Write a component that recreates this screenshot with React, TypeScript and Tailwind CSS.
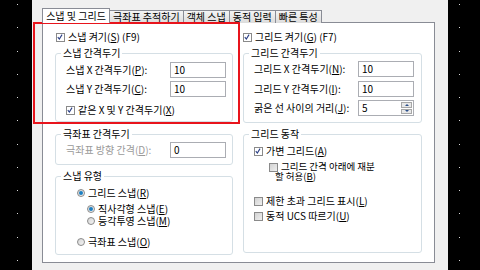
import type { ReactNode } from "react";

const dots = Array.from({ length: 12 }, (_, i) => i);

function DotStrip({ dotX }: { dotX: string }) {
  return (
    <div className={`w-[32px] h-full bg-black pt-[4px] pb-[9px] flex flex-col justify-between ${dotX}`}>
      {dots.map((d) => (
        <span key={d} className="block w-[1px] h-[1px] bg-[#d8d8d8]" />
      ))}
    </div>
  );
}

function Checkbox({ checked }: { checked?: boolean }) {
  return (
    <span
      className={`relative shrink-0 w-[9px] h-[9px] border border-[#8a8a8a] ${
        checked ? "bg-white" : "bg-gradient-to-br from-[#d2d2d2] to-[#efefef]"
      }`}
    >
      {checked && (
        <svg viewBox="0 0 9 9" className="absolute left-0 top-0 w-[7px] h-[7px]">
          <path d="M1 4 L3 6.5 L6.5 0.8" stroke="#2b3f86" strokeWidth="1.4" fill="none" />
        </svg>
      )}
    </span>
  );
}

function Radio({ checked }: { checked?: boolean }) {
  return (
    <span className="shrink-0 w-[8px] h-[8px] rounded-full border border-[#8a8a8a] bg-gradient-to-br from-[#d6d6d6] to-[#f4f4f4] flex items-center justify-center">
      {checked && <span className="w-[4px] h-[4px] rounded-full bg-[#1c7fc2]" />}
    </span>
  );
}

function Group({ title, className, children }: { title: string; className: string; children: ReactNode }) {
  return (
    <div className={`relative border border-[#d5dfe5] rounded-[3px] ${className}`}>
      <span className="absolute -top-[7px] left-[5px] bg-white px-[2px] leading-[12px]">{title}</span>
      {children}
    </div>
  );
}

function Field({ label, value, dim, spin }: { label: ReactNode; value: string; dim?: boolean; spin?: boolean }) {
  return (
    <div className="flex items-center h-[16px]">
      <span className={`w-[104px] ${dim ? "text-[#9a9a9a]" : ""}`}>{label}</span>
      <span className="relative w-[56px] h-[16px] border border-[#abadb3] bg-white pl-[3px] leading-[13px]">
        {value}
        {spin && (
          <span className="absolute right-[1px] top-[1px] w-[11px] h-[12px] flex flex-col gap-[1px]">
            <span className="flex-1 border border-[#a7a7a7] bg-[#e8e8e8] flex items-center justify-center">
              <span className="w-0 h-0 border-x-[2px] border-x-transparent border-b-[2px] border-b-[#2a4f8a]" />
            </span>
            <span className="flex-1 border border-[#a7a7a7] bg-[#e8e8e8] flex items-center justify-center">
              <span className="w-0 h-0 border-x-[2px] border-x-transparent border-t-[2px] border-t-[#2a4f8a]" />
            </span>
          </span>
        )}
      </span>
    </div>
  );
}

const tabs = ["극좌표 추적하기", "객체 스냅", "동적 입력", "빠른 특성"];

export default function App() {
  return (
    <div className="w-[480px] h-[270px] flex overflow-hidden font-['Noto_Sans_CJK_KR',sans-serif] text-[10px] text-black">
      <DotStrip dotX="pl-[17px]" />
      <div className="relative flex-1 bg-[#f0f0f0] pl-[10px] pt-[8px]">
        <div className="flex items-end h-[15px] leading-[12px]">
          <div className="relative z-10 h-[15px] w-[68px] bg-white border border-b-0 border-[#898c95] flex justify-center pt-[1px]">
            스냅 및 그리드
          </div>
          {tabs.map((t) => (
            <div
              key={t}
              className="h-[13px] px-[3px] -ml-[1px] first:ml-0 border border-b-0 border-[#898c95] bg-gradient-to-b from-[#f4f4f4] to-[#dcdcdc] flex items-center whitespace-nowrap"
            >
              {t}
            </div>
          ))}
        </div>
        <div className="w-[393px] h-[241px] -mt-[1px] bg-white border border-[#898c95] flex gap-[10px] pl-[12px] pt-[8px] leading-[12px]">
          <div className="w-[178px] flex flex-col">
            <div className="flex items-center gap-[3px] h-[12px] pl-[1px]">
              <Checkbox checked />
              <span>
                스냅 켜기(<u>S</u>) (F9)
              </span>
            </div>
            <Group title="스냅 간격두기" className="mt-[10px] h-[69px] pl-[10px] pt-[8px] pr-[5px]">
              <Field label={<>스냅 X 간격두기(<u>P</u>):</>} value="10" />
              <div className="mt-[3px]">
                <Field label={<>스냅 Y 간격두기(<u>C</u>):</>} value="10" />
              </div>
              <div className="mt-[7px] flex items-center gap-[3px] h-[12px]">
                <Checkbox checked />
                <span>
                  같은 X 및 Y 간격두기(<u>X</u>)
                </span>
              </div>
            </Group>
            <Group title="극좌표 간격두기" className="mt-[12px] h-[31px] pl-[10px] pt-[7px]">
              <Field label={<>극좌표 방향 간격(<u>D</u>):</>} value="0" dim />
            </Group>
            <Group title="스냅 유형" className="mt-[11px] h-[79px] pt-[10px]">
              <div className="flex items-center gap-[3px] h-[12px] pl-[21px]">
                <Radio checked />
                <span>
                  그리드 스냅(<u>R</u>)
                </span>
              </div>
              <div className="mt-[4px] flex items-center gap-[3px] h-[12px] pl-[31px]">
                <Radio checked />
                <span>
                  직사각형 스냅(<u>E</u>)
                </span>
              </div>
              <div className="flex items-center gap-[3px] h-[12px] pl-[31px]">
                <Radio />
                <span>
                  등각투영 스냅(<u>M</u>)
                </span>
              </div>
              <div className="mt-[9px] flex items-center gap-[3px] h-[12px] pl-[21px]">
                <Radio />
                <span>
                  극좌표 스냅(<u>O</u>)
                </span>
              </div>
            </Group>
          </div>
          <div className="w-[179px] flex flex-col">
            <div className="flex items-center gap-[3px] h-[12px]">
              <Checkbox checked />
              <span>
                그리드 켜기(<u>G</u>) (F7)
              </span>
            </div>
            <Group title="그리드 간격두기" className="mt-[10px] h-[70px] pl-[10px] pt-[7px]">
              <Field label={<>그리드 X 간격두기(<u>N</u>):</>} value="10" />
              <div className="mt-[4px]">
                <Field label={<>그리드 Y 간격두기(<u>I</u>):</>} value="10" />
              </div>
              <div className="mt-[3px]">
                <Field label={<>굵은 선 사이의 거리(<u>J</u>):</>} value="5" spin />
              </div>
            </Group>
            <Group title="그리드 동작" className="mt-[11px] h-[119px] pl-[10px] pt-[10px]">
              <div className="flex items-center gap-[3px] h-[12px]">
                <Checkbox checked />
                <span>
                  가변 그리드(<u>A</u>)
                </span>
              </div>
              <div className="mt-[5px] flex items-start gap-[3px] pl-[15px]">
                <span className="mt-[1px] flex">
                  <Checkbox />
                </span>
                <span className="leading-[10px] text-[9.5px] -mt-[1px]">
                  그리드 간격 아래에 재분
                  <br />
                  <span className="-ml-[6px]">
                    할 허용(<u>B</u>)
                  </span>
                </span>
              </div>
              <div className="mt-[14px] flex items-center gap-[3px] h-[12px]">
                <Checkbox />
                <span>
                  제한 초과 그리드 표시(<u>L</u>)
                </span>
              </div>
              <div className="mt-[3px] flex items-center gap-[3px] h-[12px]">
                <Checkbox />
                <span>
                  동적 UCS 따르기(<u>U</u>)
                </span>
              </div>
            </Group>
          </div>
        </div>
        <div className="absolute left-[1px] top-[22px] w-[207px] h-[102px] border-2 border-[#e8141c] pointer-events-none" />
      </div>
      <DotStrip dotX="pl-[11px]" />
    </div>
  );
}
